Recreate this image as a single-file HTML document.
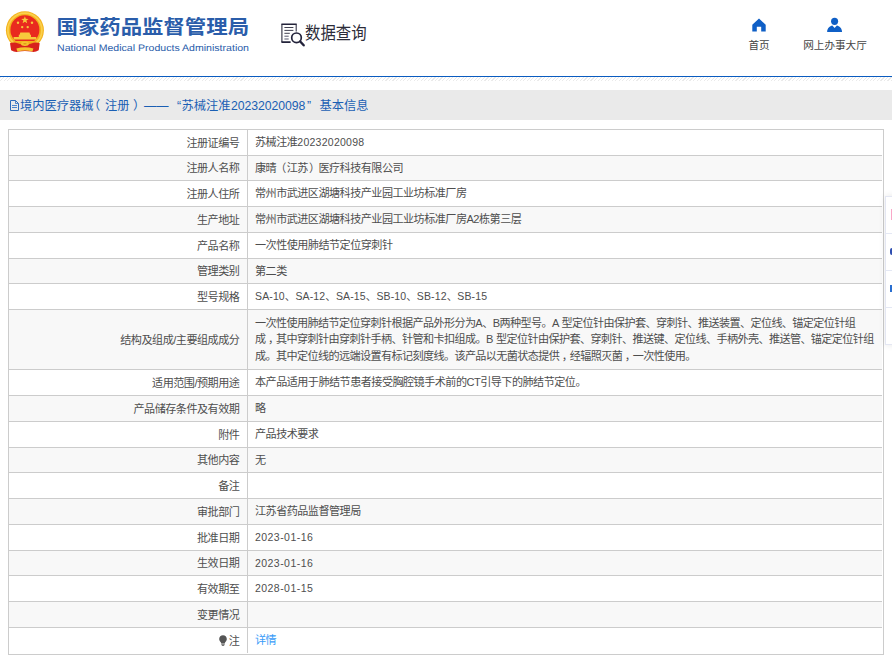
<!DOCTYPE html>
<html lang="zh-CN">
<head>
<meta charset="utf-8">
<title>国家药品监督管理局 数据查询</title>
<style>
html,body{margin:0;padding:0;}
body{width:892px;height:664px;position:relative;overflow:hidden;background:#fff;
 font-family:"Liberation Sans","Noto Sans CJK SC",sans-serif;color:#4e4e4e;font-size:10.5px;}
.abs{position:absolute;}
#emblem{left:0;top:0;width:56px;height:60px;}
#cn{left:56.5px;top:12.3px;transform-origin:0 50%;transform:scaleY(0.9);font-size:21.4px;font-weight:bold;color:#2a5daa;white-space:nowrap;line-height:32px;letter-spacing:0px;}
#en{left:57px;top:36px;width:200px;height:20px;overflow:visible;}
#sicon{left:278px;top:20px;width:30px;height:30px;}
#stitle{left:304.5px;top:18.6px;font-size:17.6px;color:#2b2b38;white-space:nowrap;line-height:28px;transform-origin:0 50%;transform:scaleX(0.875);}
.nav{font-size:10.6px;color:#444;white-space:nowrap;text-align:center;line-height:14px;}
#blue{left:0;top:75.8px;width:892px;height:1.3px;background:#0a5cc0;}
#hatch{left:0;top:77px;width:892px;height:4px;background:repeating-linear-gradient(135deg,#eaeaea 0,#eaeaea 0.8px,#fff 0.8px,#fff 2.5px);}
#bar{left:0;top:90px;width:892px;height:30px;background:#eaeaea;}
#bartxt{left:20px;top:91.2px;height:30px;line-height:30px;font-size:12.25px;color:#1a5fb4;white-space:nowrap;}
.sg{position:absolute;top:0;}
#tbl{left:8px;top:129px;width:874px;height:524px;border:1px solid #ccc;}
.r{position:absolute;left:9px;width:873px;background:#fff;}
.r.odd{background:#f8f8f8;}
.r .l{position:absolute;left:0;top:0;bottom:0;width:230.4px;display:flex;align-items:center;justify-content:flex-end;white-space:nowrap;font-size:11.1px;letter-spacing:-0.5px;}
.r .l span{position:relative;top:-1px;}
.r .v{position:absolute;left:246px;top:0;bottom:0;right:8px;display:flex;align-items:center;white-space:nowrap;line-height:16.4px;font-size:11.1px;letter-spacing:-0.52px;}
.r .v i{font-size:10.5px;}
.r .v.para{letter-spacing:-0.6px;word-spacing:0.9px;}
.hl{position:absolute;left:9px;width:873px;height:1px;background:#ccc;}
#vl{left:247px;top:130px;width:1px;height:523px;background:#ccc;}
#rgap{left:882px;top:130px;width:1px;height:524px;background:#fff;}
#bgap{left:9px;top:653px;width:874px;height:1px;background:#fff;}
.lnk{color:#3a9cf8;}
.pl,.pr{font-weight:normal;position:relative;}
.pl{left:-1px;}
.v u{text-decoration:none;position:relative;left:2.5px;}
.pr{left:1px;}
.bulb{vertical-align:-1.2px;margin-right:1.7px;}
#side{left:885px;top:196px;width:10px;height:147px;background:#fff;border:1px solid #e4e7f3;box-shadow:0 0 6px rgba(0,0,0,.10);}
</style>
</head>
<body>
<svg id="emblem" class="abs" viewBox="0 0 56 60">
 <defs><clipPath id="cpd"><rect x="0" y="0" width="56" height="41"/></clipPath></defs>
 <circle cx="24.9" cy="30.2" r="19" fill="#f4b21c"/>
 <circle cx="24.9" cy="30.2" r="17" fill="none" stroke="#fad04c" stroke-width="1.800"/>
 <circle cx="24.9" cy="29.8" r="14.5" fill="#e92a1f" clip-path="url(#cpd)"/>
 <path d="M13.500 41 Q24.900 44.500 36.300 41 L35 43.500 Q24.900 46.500 14.800 43.500z" fill="#f0a91a"/>
 <path d="M10 43.200 Q14 41.600 18.500 43.600 L24.900 45.600 L31.300 43.600 Q35.800 41.600 39.700 43.200 L38.700 50.300 Q35 52.600 31 51.600 L24.900 50.900 L18.800 51.600 Q15 52.600 11.100 50.300z" fill="#d8211c"/>
 <path d="M16.400 48.400 Q24.900 46.300 33.400 48.400 L32.400 51.400 Q24.900 49.600 17.400 51.400z" fill="#f5c22e"/>
 <ellipse cx="24.9" cy="43.800" rx="3.900" ry="2.200" fill="#f5c22e"/>
 <ellipse cx="24.9" cy="43.800" rx="1.800" ry="0.800" fill="#e0951a"/>
 <path d="M13.900 39.400h22.400v-2.300h-5.300v-2.300h-0.800l-0.700-2.300h-9.200l-0.700 2.300h-0.800v2.300h-5.300z" fill="#f7c93c"/>
 <polygon points="24.900,16.200 25.820,18.830 28.610,18.890 26.390,20.580 27.190,23.250 24.900,21.660 22.610,23.250 23.410,20.580 21.190,18.890 23.980,18.830" fill="#f7c93c"/>
 <circle cx="18" cy="22.700" r="1.200" fill="#f7c93c"/>
 <circle cx="32" cy="22.700" r="1.200" fill="#f7c93c"/>
 <circle cx="22.200" cy="27.100" r="1.200" fill="#f7c93c"/>
 <circle cx="27.700" cy="27.100" r="1.200" fill="#f7c93c"/>
</svg>
<div id="cn" class="abs">国家药品监督管理局</div>
<svg id="en" class="abs" viewBox="0 0 200 20"><text x="0" y="0" transform="translate(0,14.7) scale(1,0.9)" font-family="Liberation Sans, sans-serif" font-size="10.57" fill="#2a5daa" text-rendering="geometricPrecision">National Medical Products Administration</text></svg>

<svg id="sicon" class="abs" viewBox="0 0 30 30">
 <path d="M3.900 4.300V22.100" fill="none" stroke="#2b2b3c" stroke-width="1.100"/>
 <path d="M3.400 4.300H18.700M3.400 22.100H12.600" fill="none" stroke="#23233a" stroke-width="1.600"/>
 <path d="M18.200 4.300V11.500" fill="none" stroke="#3a3a4c" stroke-width="1.100"/>
 <path d="M6.400 7.500H15.400M6.400 10.400H15.400M6.400 13.300H11.800" fill="none" stroke="#2b2b3c" stroke-width="0.900"/>
 <path d="M6.400 16.200H10.700M6.400 19H10.700" fill="none" stroke="#55556a" stroke-width="1"/>
 <circle cx="18.500" cy="17.800" r="4.800" fill="#fff" stroke="#22223a" stroke-width="1.700"/>
 <path d="M22.200 21.500L25.700 25.300" stroke="#22223a" stroke-width="2.400" stroke-linecap="round"/>
</svg>
<div id="stitle" class="abs">数据查询</div>

<svg class="abs" style="left:751px;top:17px;width:16px;height:16px" viewBox="0 0 16 16">
 <path d="M8 1.500L1.300 7.800V14.500H5.800V9.800H10.200V14.500H14.700V7.800z" fill="#0f5fc6"/>
</svg>
<div class="abs nav" style="left:729px;width:60px;top:38px;">首页</div>
<svg class="abs" style="left:825.950px;top:16.050px;width:17.200px;height:17.600px" viewBox="0 0 18 18" preserveAspectRatio="none">
 <circle cx="9" cy="5.400" r="3.700" fill="#0f5fc6"/>
 <path d="M1.200 16.400C1.200 12.500 4.200 10.300 6.600 9.800L9 12.300L11.400 9.800C13.800 10.300 16.800 12.500 16.800 16.400z" fill="#0f5fc6"/>
</svg>
<div class="abs nav" style="left:795px;width:80px;top:38px;">网上办事大厅</div>

<div id="blue" class="abs"></div>
<div id="hatch" class="abs"></div>
<div id="bar" class="abs"></div>
<svg class="abs" style="left:10px;top:100px;width:9px;height:11px" viewBox="0 0 9 11">
 <path d="M0.500 0.500H5.500L8.500 3.500V10.500H0.500z" fill="none" stroke="#2f6cbc" stroke-width="1"/>
 <path d="M5.500 0.500V3.500H8.500" fill="none" stroke="#2f6cbc" stroke-width="0.800"/>
 <path d="M2 5.500H7M2 7.500H7" fill="none" stroke="#4f86cc" stroke-width="1"/>
</svg>
<div id="bartxt" class="abs"><span class="sg" style="left:0">境内医疗器械</span><span class="sg" style="left:68px">（</span><span class="sg" style="left:85px">注册</span><span class="sg" style="left:113px">）</span><span class="sg" style="left:124px">——</span><span class="sg" style="left:157px">“</span><span class="sg" style="left:161.500px">苏械注准</span><span class="sg" style="left:211px;letter-spacing:-0.07px">20232020098</span><span class="sg" style="left:287px">”</span><span class="sg" style="left:299.500px">基本信息</span></div>

<div id="tbl" class="abs"></div>
<div class="r" style="top:130px;height:25px"><div class="l"><span>注册证编号</span></div><div class="v"><span>苏械注准<i style="font-style:normal;letter-spacing:0.26px">20232020098</i></span></div></div>
<div class="hl" style="top:155px"></div>
<div class="r odd" style="top:156px;height:24px"><div class="l"><span>注册人名称</span></div><div class="v"><span>康晴<b class="pl">（</b>江苏<b class="pr">）</b>医疗科技有限公司</span></div></div>
<div class="hl" style="top:180px"></div>
<div class="r" style="top:181px;height:25px"><div class="l"><span>注册人住所</span></div><div class="v"><span>常州市武进区湖塘科技产业园工业坊标准厂房</span></div></div>
<div class="hl" style="top:206px"></div>
<div class="r odd" style="top:207px;height:25px"><div class="l"><span>生产地址</span></div><div class="v"><span>常州市武进区湖塘科技产业园工业坊标准厂房A2栋第三层</span></div></div>
<div class="hl" style="top:232px"></div>
<div class="r" style="top:233px;height:25px"><div class="l"><span>产品名称</span></div><div class="v"><span>一次性使用肺结节定位穿刺针</span></div></div>
<div class="hl" style="top:258px"></div>
<div class="r odd" style="top:259px;height:24px"><div class="l"><span>管理类别</span></div><div class="v"><span>第二类</span></div></div>
<div class="hl" style="top:283px"></div>
<div class="r" style="top:284px;height:25px"><div class="l"><span>型号规格</span></div><div class="v"><span><i style="font-style:normal;letter-spacing:0.13px">SA-10、SA-12、SA-15、SB-10、SB-12、SB-15</i></span></div></div>
<div class="hl" style="top:309px"></div>
<div class="r odd" style="top:310px;height:59px"><div class="l"><span>结构及组成/主要组成成分</span></div><div class="v para"><span>一次性使用肺结节定位穿刺针根据产品外形分为A、B两种型号。A 型定位针由保护套、穿刺针、推送装置、定位线、锚定定位针组<br>成<u>，</u>其中穿刺针由穿刺针手柄、针管和卡扣组成。B 型定位针由保护套、穿刺针、推送键、定位线、手柄外壳、推送管、锚定定位针组<br>成。其中定位线的远端设置有标记刻度线。该产品以无菌状态提供<u>，</u>经辐照灭菌<u>，</u>一次性使用。</span></div></div>
<div class="hl" style="top:369px"></div>
<div class="r" style="top:370px;height:25px"><div class="l"><span>适用范围/预期用途</span></div><div class="v"><span>本产品适用于肺结节患者接受胸腔镜手术前的CT引导下的肺结节定位。</span></div></div>
<div class="hl" style="top:395px"></div>
<div class="r odd" style="top:396px;height:25px"><div class="l"><span>产品储存条件及有效期</span></div><div class="v"><span>略</span></div></div>
<div class="hl" style="top:421px"></div>
<div class="r" style="top:422px;height:25px"><div class="l"><span>附件</span></div><div class="v"><span>产品技术要求</span></div></div>
<div class="hl" style="top:447px"></div>
<div class="r odd" style="top:448px;height:24px"><div class="l"><span>其他内容</span></div><div class="v"><span>无</span></div></div>
<div class="hl" style="top:472px"></div>
<div class="r" style="top:473px;height:25px"><div class="l"><span>备注</span></div><div class="v"><span></span></div></div>
<div class="hl" style="top:498px"></div>
<div class="r odd" style="top:499px;height:25px"><div class="l"><span>审批部门</span></div><div class="v"><span>江苏省药品监督管理局</span></div></div>
<div class="hl" style="top:524px"></div>
<div class="r" style="top:525px;height:25px"><div class="l"><span>批准日期</span></div><div class="v"><span><i style="font-style:normal;letter-spacing:0.45px">2023-01-16</i></span></div></div>
<div class="hl" style="top:550px"></div>
<div class="r odd" style="top:551px;height:24px"><div class="l"><span>生效日期</span></div><div class="v"><span><i style="font-style:normal;letter-spacing:0.45px">2023-01-16</i></span></div></div>
<div class="hl" style="top:575px"></div>
<div class="r" style="top:576px;height:25px"><div class="l"><span>有效期至</span></div><div class="v"><span><i style="font-style:normal;letter-spacing:0.45px">2028-01-15</i></span></div></div>
<div class="hl" style="top:601px"></div>
<div class="r odd" style="top:602px;height:25px"><div class="l"><span>变更情况</span></div><div class="v"><span></span></div></div>
<div class="hl" style="top:627px"></div>
<div class="r" style="top:628px;height:25px"><div class="l"><span><svg class="bulb" viewBox="0 0 8 11" width="8" height="11"><path d="M4 0.2C1.8 0.2 0.2 1.9 0.2 3.9c0 1.4 0.8 2.3 1.4 3.1c0.4 0.5 0.6 0.9 0.6 1.4h3.6c0-0.5 0.2-0.9 0.6-1.4c0.6-0.8 1.4-1.7 1.4-3.1C7.8 1.9 6.2 0.2 4 0.200z" fill="#555"/><rect x="2.3" y="8.8" width="3.4" height="0.9" fill="#555"/><rect x="2.8" y="10" width="2.4" height="0.8" fill="#555"/></svg>注</span></div><div class="v"><span><a class="lnk">详情</a></span></div></div>
<div id="vl" class="abs"></div>
<div id="rgap" class="abs"></div>
<div id="bgap" class="abs"></div>
<div id="side" class="abs"></div>
<div class="abs" style="left:890.700px;top:209px;width:2px;height:11px;background:#f9a8c8"></div>
<div class="abs" style="left:890.400px;top:248px;width:2px;height:7px;background:#2f4fb0;border-radius:2px 0 0 2px"></div>
<div class="abs" style="left:890.300px;top:285px;width:2px;height:7px;background:#2a6fd0"></div>
<div class="abs" style="left:886px;top:233px;width:6px;height:1px;background:#e4e8f4"></div>
<div class="abs" style="left:886px;top:270px;width:6px;height:1px;background:#e4e8f4"></div>
<div class="abs" style="left:886px;top:306.500px;width:6px;height:1px;background:#e4e8f4"></div>
</body>
</html>
